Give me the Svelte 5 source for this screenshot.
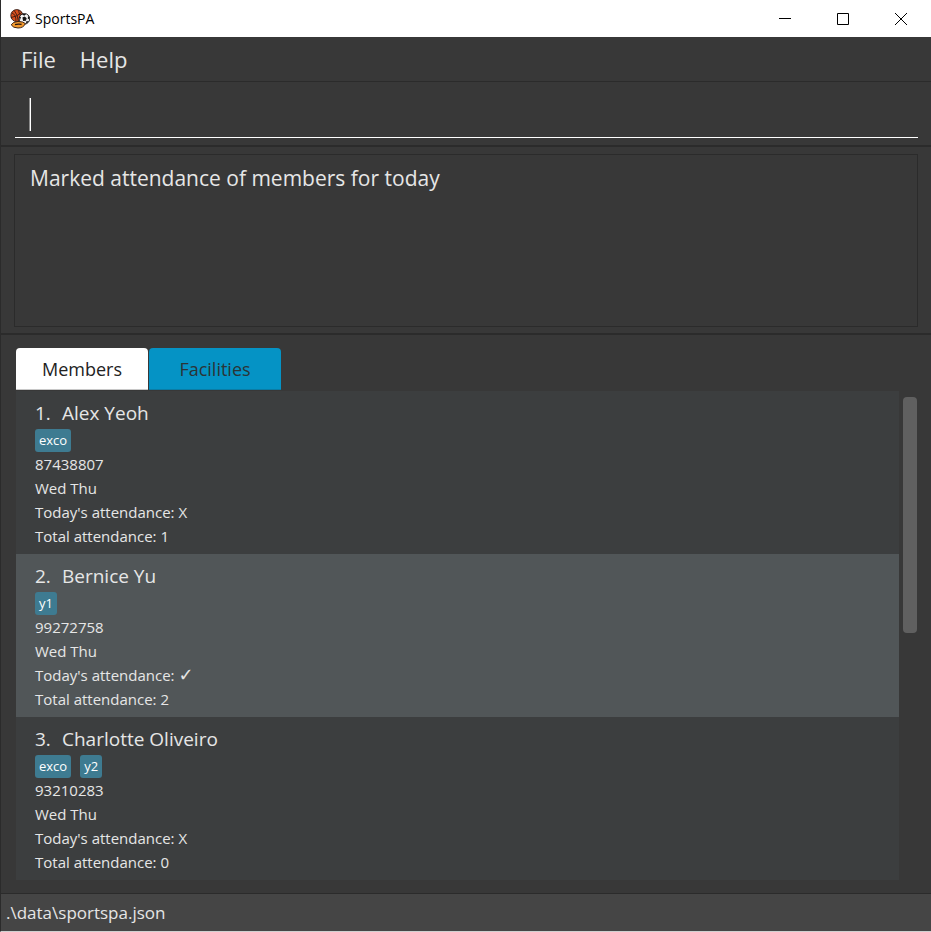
<script>
  let tab = $state('Members');
  let command = $state('');
  let selected = $state(2);
  const tabs = ['Members', 'Facilities'];
  const members = [
    { id: 1, name: 'Alex Yeoh', tags: ['exco'], phone: '87438807', days: 'Wed Thu', present: false, total: 1 },
    { id: 2, name: 'Bernice Yu', tags: ['y1'], phone: '99272758', days: 'Wed Thu', present: true, total: 2 },
    { id: 3, name: 'Charlotte Oliveiro', tags: ['exco', 'y2'], phone: '93210283', days: 'Wed Thu', present: false, total: 0 }
  ];
</script>

<div class="window">
  <header class="titlebar">
    <svg class="logo" viewBox="0 0 20 20" width="20" height="20" aria-hidden="true">
      <circle cx="6.8" cy="6.6" r="6" fill="#d9501e" stroke="#2a1510" stroke-width=".9" />
      <path d="M1 8.6Q7 7.5 12 3.4M4.2 1.4Q8 6 8.4 12.4M1.8 4Q6 5 6 12.6M8.6 1.2Q8 5 12.4 7.6" fill="none" stroke="#2a1510" stroke-width=".8" />
      <circle cx="14.4" cy="9.8" r="5.3" fill="#f4f4f4" stroke="#151515" stroke-width=".9" />
      <path d="M12.4 8.6l2.3-1 2 1.6-.8 2.6-2.8.1zM11.6 5l4.6 0-2 1.8zM18 6.4l1.8 3-2 .8zM19 12l-2.4 2.8-.8-2.2zM9 7.4l2 .6-1 3z" fill="#151515" />
      <path d="M1.2 15.8Q3 12.6 8 12.5Q13.4 12.4 15.4 14.6Q13.6 19 8 19Q3 19 1.2 15.8Z" fill="#f29a2e" stroke="#2a1510" stroke-width=".9" />
      <path d="M5 15.6Q8 14.8 11.6 15.4" fill="none" stroke="#2a1510" stroke-width="1.4" />
    </svg>
    <span class="title">SportsPA</span>
    <div class="controls">
      <button aria-label="Minimize"><svg width="12" height="12" viewBox="0 0 12 12"><path d="M0 5.5h12" /></svg></button>
      <button aria-label="Maximize"><svg width="12" height="12" viewBox="0 0 12 12"><path d="M.5.5h11v11H.5z" /></svg></button>
      <button aria-label="Close"><svg width="12" height="12" viewBox="0 0 12 12"><path d="M0 0l12 12M12 0L0 12" /></svg></button>
    </div>
  </header>

  <nav class="menubar">
    <button>File</button>
    <button>Help</button>
  </nav>

  <section class="command">
    <div class="field">
      <span class="caret"></span>
      <input type="text" aria-label="Command" bind:value={command} />
    </div>
  </section>

  <section class="result">
    <output>Marked attendance of members for today</output>
  </section>

  <main>
    <div class="tabs" role="tablist">
      {#each tabs as name}
        <button role="tab" aria-selected={tab === name} class:active={tab === name} onclick={() => (tab = name)}>{name}</button>
      {/each}
    </div>
    <div class="panel">
      <ul>
        {#each members as m (m.id)}
          <li class:selected={selected === m.id}>
            <h2><span class="index">{m.id}.</span>{m.name}</h2>
            <div class="tags">
              {#each m.tags as tag}<span class="tag">{tag}</span>{/each}
            </div>
            <p>{m.phone}</p>
            <p>{m.days}</p>
            <p>Today's attendance: {#if m.present}<span class="check">✓</span>{:else}X{/if}</p>
            <p>Total attendance: {m.total}</p>
          </li>
        {/each}
      </ul>
      <div class="scrollbar"><div class="thumb"></div></div>
    </div>
  </main>

  <footer>.\data\sportspa.json</footer>
</div>

<style>
  :global(body) { margin: 0; }
  .window {
    box-sizing: border-box;
    min-height: 100vh;
    display: flex;
    flex-direction: column;
    background: #383838;
    color: #e6e6e6;
    border-left: 1px solid #2b2b2b;
    border-bottom: 1px solid #d0d0d0;
    font-family: "Open Sans", "Noto Sans", "DejaVu Sans", sans-serif;
  }
  button { font: inherit; color: inherit; background: none; border: 0; padding: 0; }
  .titlebar { display: flex; align-items: center; height: 37px; background: #fff; color: #000; padding-left: 9px; }
  .logo { flex: none; }
  .title { font-size: 14px; margin-left: 5px; }
  .controls { margin-left: auto; display: flex; height: 36px; padding-right: 1px; }
  .controls button { width: 58px; display: grid; place-items: center; }
  .controls svg { fill: none; stroke: #000; stroke-width: 1; }
  .menubar { display: flex; gap: 24px; height: 44px; padding: 0 20px; border-bottom: 1px solid #2b2b2b; font-size: 22px; }
  .command { padding: 9px 13px 7px 14px; border-bottom: 2px solid #2b2b2b; }
  .field { display: flex; align-items: center; height: 46px; padding-left: 14px; border-bottom: 1px solid #fff; }
  .caret { width: 2px; height: 33px; background: linear-gradient(90deg, #8a8a8a 50%, #fff 50%); }
  input { flex: 1; min-width: 0; height: 33px; background: none; border: 0; outline: 0; padding: 0; color: #fff; font: inherit; font-size: 21px; }
  .result { padding: 7px 13px 6px; border-bottom: 2px solid #2b2b2b; }
  output { box-sizing: border-box; display: block; min-height: 173px; border: 1px solid #2b2b2b; padding: 8px 15px; font-size: 21px; line-height: 30px; }
  main { flex: 1; padding: 13px 14px 13px 15px; }
  .tabs { display: flex; gap: 1px; margin-bottom: 1px; }
  .tabs button { box-sizing: border-box; width: 132px; height: 42px; background: #0593c5; color: #2b3436; border-bottom: 1px solid #0a7ca5; border-radius: 4px 4px 0 0; font-size: 18px; }
  .tabs .active { background: #fff; color: #222; border-bottom-color: #c8c8c8; }
  .panel { display: flex; gap: 4px; }
  ul { flex: 1; margin: 0; padding: 0; list-style: none; }
  li { padding: 8px 19px 6px; background: #3c3e3f; }
  .selected { background: #515658; }
  h2 { margin: 0; font-size: 19px; font-weight: 400; line-height: 28px; }
  .index { display: inline-block; width: 27px; }
  .tags { display: flex; gap: 9px; padding-top: 2px; }
  .tag { background: #3e7b91; color: #fff; border-radius: 3px; padding: 0 4px; font-size: 13px; line-height: 23px; }
  p { margin: 0; font-size: 15px; line-height: 24px; white-space: nowrap; }
  .check { font-family: "DejaVu Sans", sans-serif; font-size: 18px; line-height: 1; }
  .scrollbar { width: 14px; padding-top: 6px; }
  .thumb { height: 236px; border-radius: 4px; background: #606060; }
  footer { background: #454545; border-top: 1px solid #2b2b2b; padding: 0 5px; font-size: 17px; line-height: 37px; }
</style>
